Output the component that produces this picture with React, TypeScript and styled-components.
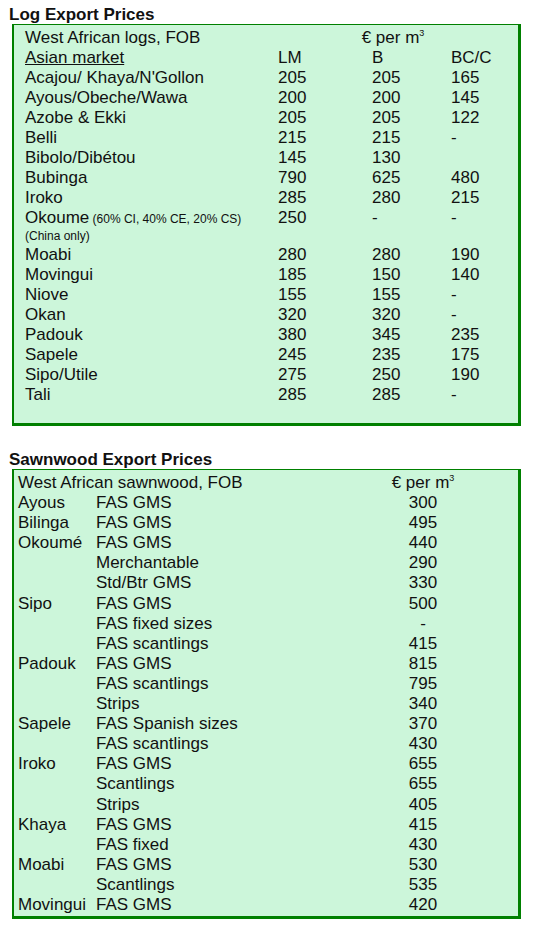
import styled, { createGlobalStyle } from 'styled-components';

const GlobalStyle = createGlobalStyle`
	html, body {
		margin: 0;
		padding: 0;
		background: #ffffff;
	}
	body {
		font-family: 'Liberation Sans', Arial, sans-serif;
		color: #111111;
	}
	* {
		box-sizing: border-box;
	}
`;

const Page = styled.div`
	width: 537px;
	padding-top: 6px;
`;

const Title = styled.h2<{ $top?: number }>`
	margin: ${(props) => props.$top ?? 0}px 0 0 9px;
	font-size: 17px;
	line-height: 18px;
	font-weight: bold;
`;

const Box = styled.div<{ $padLeft: number; $padTop: number; $padBottom: number; $rowHeight: number }>`
	width: 509px;
	background-color: #ccf6da;
	margin-left: 12px;
	border-top: 1px solid #008000;
	border-left: 2px solid #008000;
	border-right: 3px solid #008000;
	border-bottom: 3px solid #008000;
	padding: ${(props) => `${props.$padTop}px 0 ${props.$padBottom}px ${props.$padLeft}px`};
	font-size: 17px;
	line-height: ${(props) => props.$rowHeight}px;
`;

const LogGrid = styled.div`
	display: grid;
	grid-template-columns: 253px 94px 79px 1fr;
`;

const SawnGrid = styled.div`
	display: grid;
	grid-template-columns: 78px 294px 66px 1fr;
`;

const Cell = styled.div<{ $span?: number; $center?: boolean; $padRight?: number }>`
	grid-column: span ${(props) => props.$span ?? 1};
	text-align: ${(props) => (props.$center ? 'center' : 'left')};
	padding-right: ${(props) => props.$padRight ?? 0}px;
	white-space: nowrap;
`;

const Underlined = styled.span`
	text-decoration: underline;
`;

const Note = styled.span`
	font-size: 12px;
`;

const SubNote = styled.div`
	font-size: 12px;
	line-height: 14px;
	margin-bottom: 2px;
`;

const Sup = styled.sup`
	font-size: 9px;
	vertical-align: 7px;
	line-height: 0;
`;

const Unit = () => (
	<>
		€ per m<Sup>3</Sup>
	</>
);

const logs: [string, string, string, string][] = [
	['Acajou/ Khaya/N\'Gollon', '205', '205', '165'],
	['Ayous/Obeche/Wawa', '200', '200', '145'],
	['Azobe & Ekki', '205', '205', '122'],
	['Belli', '215', '215', '-'],
	['Bibolo/Dibétou', '145', '130', ''],
	['Bubinga', '790', '625', '480'],
	['Iroko', '285', '280', '215'],
	['Okoume', '250', '-', '-'],
	['Moabi', '280', '280', '190'],
	['Movingui', '185', '150', '140'],
	['Niove', '155', '155', '-'],
	['Okan', '320', '320', '-'],
	['Padouk', '380', '345', '235'],
	['Sapele', '245', '235', '175'],
	['Sipo/Utile', '275', '250', '190'],
	['Tali', '285', '285', '-'],
];

const sawn: [string, string, string][] = [
	['Ayous', 'FAS GMS', '300'],
	['Bilinga', 'FAS GMS', '495'],
	['Okoumé', 'FAS GMS', '440'],
	['', 'Merchantable', '290'],
	['', 'Std/Btr GMS', '330'],
	['Sipo', 'FAS GMS', '500'],
	['', 'FAS fixed sizes', '-'],
	['', 'FAS scantlings', '415'],
	['Padouk', 'FAS GMS', '815'],
	['', 'FAS scantlings', '795'],
	['', 'Strips', '340'],
	['Sapele', 'FAS Spanish sizes', '370'],
	['', 'FAS scantlings', '430'],
	['Iroko', 'FAS GMS', '655'],
	['', 'Scantlings', '655'],
	['', 'Strips', '405'],
	['Khaya', 'FAS GMS', '415'],
	['', 'FAS fixed', '430'],
	['Moabi', 'FAS GMS', '530'],
	['', 'Scantlings', '535'],
	['Movingui', 'FAS GMS', '420'],
];

export default function App() {
	return (
		<Page>
			<GlobalStyle />
			<Title>Log Export Prices</Title>
			<Box $padLeft={11} $padTop={3} $padBottom={18} $rowHeight={20}>
				<LogGrid>
					<Cell>West African logs, FOB</Cell>
					<Cell $span={3} $center $padRight={10}>
						<Unit />
					</Cell>
					<Cell>
						<Underlined>Asian market</Underlined>
					</Cell>
					<Cell>LM</Cell>
					<Cell>B</Cell>
					<Cell>BC/C</Cell>
					{logs.map(([name, lm, b, bc]) => (
						<LogRow key={name} name={name} lm={lm} b={b} bc={bc} />
					))}
				</LogGrid>
			</Box>
			<Title $top={25}>Sawnwood Export Prices</Title>
			<Box $padLeft={4} $padTop={3} $padBottom={1} $rowHeight={20.1}>
				<SawnGrid>
					<Cell $span={2}>West African sawnwood, FOB</Cell>
					<Cell $center>
						<Unit />
					</Cell>
					<Cell />
					{sawn.map(([species, grade, price], i) => (
						<SawnRow key={i} species={species} grade={grade} price={price} />
					))}
				</SawnGrid>
			</Box>
		</Page>
	);
}

function LogRow({ name, lm, b, bc }: { name: string; lm: string; b: string; bc: string }) {
	const okoume = name === 'Okoume';
	return (
		<>
			<Cell>
				{name}
				{okoume && <Note> (60% CI, 40% CE, 20% CS)</Note>}
				{okoume && <SubNote>(China only)</SubNote>}
			</Cell>
			<Cell>{lm}</Cell>
			<Cell>{b}</Cell>
			<Cell>{bc}</Cell>
		</>
	);
}

function SawnRow({ species, grade, price }: { species: string; grade: string; price: string }) {
	return (
		<>
			<Cell>{species}</Cell>
			<Cell>{grade}</Cell>
			<Cell $center>{price}</Cell>
			<Cell />
		</>
	);
}
